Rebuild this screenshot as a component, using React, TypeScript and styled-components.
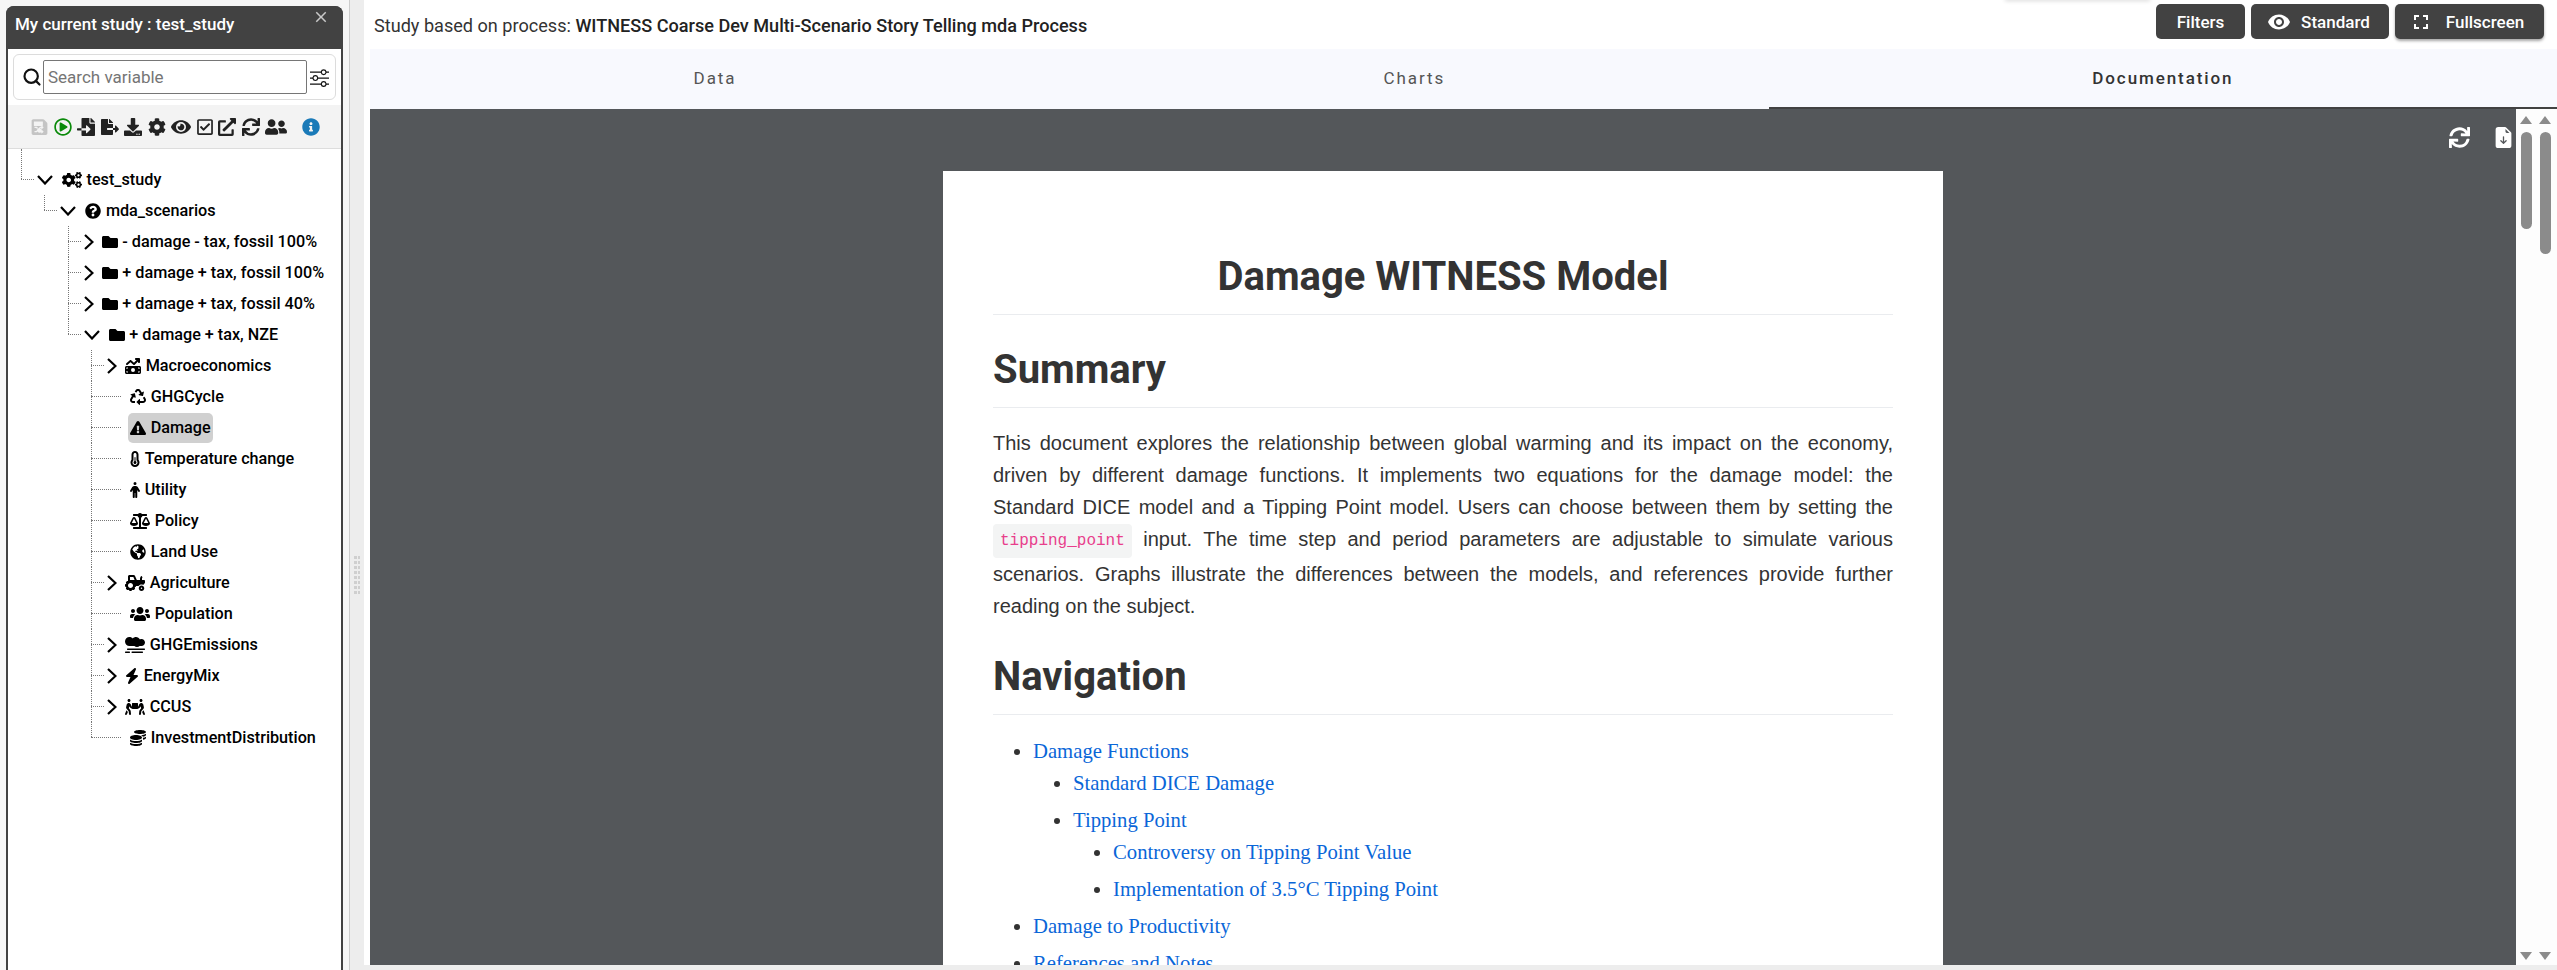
import React from 'react';
import styled, { createGlobalStyle } from 'styled-components';
import { Search } from 'lucide-react';
import {
  FaBalanceScale, FaCog, FaCogs, FaCoins, FaDownload, FaExclamationTriangle, FaExternalLinkAlt, FaEye,
  FaFileExport, FaFileImport, FaFolder, FaGlobeAmericas, FaInfoCircle, FaPeopleCarry, FaQuestionCircle, FaRandom,
  FaRecycle, FaRegCheckSquare, FaRegPlayCircle, FaSave, FaSmog, FaSync, FaTractor, FaUserFriends, FaUsers,
} from 'react-icons/fa';
import { FaBolt, FaMoneyBillTrendUp, FaPerson, FaTemperatureHalf } from 'react-icons/fa6';
import { BsFileEarmarkArrowDownFill, BsSliders } from 'react-icons/bs';
import { MdClose, MdFullscreen, MdRemoveRedEye } from 'react-icons/md';

const GlobalStyle = createGlobalStyle`
  html, body { margin: 0; height: 100%; overflow: hidden; background: #fff; }
  body { font-family: Roboto, "Liberation Sans", sans-serif; }
  #root { height: 970px; }
`;

const Page = styled.div`
  display: flex;
  height: 970px;
  overflow: hidden;
`;

const Sidebar = styled.aside`
  box-sizing: border-box;
  width: 350px;
  flex: none;
  padding: 6px 6px 0;
  background: #f6f6f6;
  border-right: 1px solid #ccc;
`;

const StudyPanel = styled.div`
  box-sizing: border-box;
  height: 100%;
  background: #fff;
  border: 2px solid #424242;
  border-bottom: none;
  border-radius: 8px 8px 0 0;
  display: flex;
  flex-direction: column;
`;

const PanelHeader = styled.div`
  position: relative;
  flex: none;
  margin: -2px -2px 0;
  padding: 8px 0 0 9px;
  box-sizing: border-box;
  height: 43px;
  background: #424242;
  border-radius: 8px 8px 0 0;
  color: #fff;
  font-size: 17px;
  font-weight: 500;
  line-height: 20px;
`;

const CloseButton = styled.span`
  position: absolute;
  top: 2px;
  right: 13px;
  color: #c9c9c9;
  font-size: 18px;
  line-height: 0;
`;

const SearchBox = styled.div`
  box-sizing: border-box;
  display: flex;
  align-items: center;
  margin: 5px;
  height: 46px;
  padding: 0 5px 0 8px;
  border: 1px solid #dcdcdc;
  border-radius: 6px;
  color: #111;
`;

const SearchInput = styled.input`
  box-sizing: border-box;
  width: 264px;
  height: 34px;
  margin: 0 3px 0 1px;
  padding: 0 4px;
  border: 1px solid #767676;
  border-radius: 2px;
  font-family: Roboto, sans-serif;
  font-size: 17px;
  &::placeholder { color: #757575; }
`;

const SlidersIcon = styled.span`
  display: flex;
  font-size: 19px;
`;

const Toolbar = styled.div`
  box-sizing: border-box;
  display: flex;
  align-items: center;
  gap: 5.5px;
  height: 44px;
  flex: none;
  padding: 0 0 0 23px;
  background: #f3f3f3;
  border-bottom: 1px solid #ddd;
  color: #222;
`;

const ToolIcon = styled.span<{ $color?: string; $push?: number; $w?: number }>`
  position: relative;
  display: flex;
  color: ${(p) => p.$color || 'inherit'};
  margin-left: ${(p) => p.$push || 0}px;
  svg { height: 18px; width: ${(p) => p.$w || 18}px; }
`;

const SaveCross = styled.span`
  position: absolute;
  left: 3px;
  top: 7px;
  display: flex;
  color: #f3f3f3;
  svg { height: 9px; width: 10px; }
`;

const TreeRoot = styled.ul`
  list-style: none;
  margin: 0;
  padding: 15px 0 0 13px;
  color: #000;
  font-size: 16.2px;
  font-weight: 500;
`;

const TreeList = styled.ul`
  list-style: none;
  margin: 0;
  padding: 0 0 0 23.4px;
`;

const TreeItem = styled.li<{ $last?: boolean; $root?: boolean; $leaf?: boolean }>`
  position: relative;
  &::before {
    content: '';
    position: absolute;
    left: 0;
    top: ${(p) => (p.$root ? '-15px' : 0)};
    height: ${(p) => (p.$last ? (p.$root ? '30px' : '15px') : '100%')};
    border-left: 1px dotted #777;
  }
  &::after {
    content: '';
    position: absolute;
    left: 0;
    top: 15px;
    width: ${(p) => (p.$leaf ? '30px' : '13px')};
    border-top: 1px dotted #777;
  }
`;

const TreeRow = styled.div<{ $leaf?: boolean }>`
  display: flex;
  align-items: center;
  height: 31px;
  padding-left: ${(p) => (p.$leaf ? 37 : 16)}px;
  white-space: nowrap;
`;

const Toggle = styled.span<{ $open?: boolean }>`
  display: flex;
  align-items: center;
  width: ${(p) => (p.$open ? 23 : 16)}px;
  flex: none;
`;

const NodeLabel = styled.span<{ $selected?: boolean; $w?: number }>`
  display: flex;
  align-items: center;
  gap: 4.5px;
  height: 30px;
  padding: 0 2px;
  border-radius: 5px;
  background: ${(p) => (p.$selected ? '#d0d0d0' : 'transparent')};
  svg { height: 16px; width: ${(p) => p.$w || 16}px; flex: none; }
`;

const Gutter = styled.div`
  box-sizing: border-box;
  width: 14px;
  flex: none;
  padding: 556px 0 0 4px;
  background: #ededed;
`;

const Grip = styled.div`
  position: relative;
  width: 6px;
  height: 38px;
  background-image: linear-gradient(#cfcfcf 3px, transparent 3px);
  background-size: 100% 5px;
  &::after {
    content: '';
    position: absolute;
    left: 2.5px;
    top: 0;
    bottom: 0;
    width: 1px;
    background: #ededed;
  }
`;

const Main = styled.main`
  flex: 1;
  min-width: 0;
  display: flex;
  flex-direction: column;
  padding-bottom: 5px;
  background: #ededed;
`;

const TopBar = styled.div`
  position: relative;
  box-sizing: border-box;
  display: flex;
  align-items: flex-start;
  height: 49px;
  flex: none;
  padding: 4px 13px 0 10px;
  background: #fff;
`;

const HiddenToast = styled.div`
  position: absolute;
  top: -4px;
  right: 407px;
  width: 145px;
  height: 4px;
  box-shadow: 0 1px 4px rgba(0, 0, 0, 0.15);
`;

const ProcessTitle = styled.div`
  flex: 1;
  margin-top: 9px;
  color: #333;
  font-size: 18.1px;
  line-height: 26px;
  b { color: #222; font-weight: 500; }
`;

const ActionButton = styled.button<{ $raised?: boolean; $w: number; $gap?: number; $shift?: number }>`
  display: flex;
  align-items: center;
  justify-content: center;
  gap: ${(p) => p.$gap || 0}px;
  box-sizing: border-box;
  width: ${(p) => p.$w}px;
  height: 35px;
  margin-left: 6px;
  padding: 0 ${(p) => p.$shift || 0}px 0 0;
  border: none;
  border-radius: 5px;
  background: #424242;
  color: #fff;
  font-family: Roboto, sans-serif;
  font-size: 17px;
  font-weight: 500;
  box-shadow: ${(p) => (p.$raised ? '0 2px 3px rgba(0,0,0,.35)' : 'none')};
  svg { font-size: 24px; }
`;

const Workspace = styled.div`
  flex: 1;
  min-height: 0;
  display: flex;
  flex-direction: column;
  padding-left: 6px;
  background: #fff;
`;

const Tabs = styled.div`
  display: flex;
  height: 60px;
  flex: none;
  background: #f8f9fe;
`;

const Tab = styled.div<{ $active?: boolean }>`
  box-sizing: border-box;
  flex: 1 1 auto;
  display: flex;
  align-items: center;
  justify-content: center;
  color: ${(p) => (p.$active ? '#333' : '#555')};
  font-size: 17px;
  font-weight: ${(p) => (p.$active ? 500 : 400)};
  letter-spacing: 1.9px;
  border-bottom: 2px solid ${(p) => (p.$active ? '#424242' : 'transparent')};
`;

const ViewerRow = styled.div`
  flex: 1;
  min-height: 0;
  display: flex;
`;

const Viewer = styled.div`
  position: relative;
  flex: 1;
  min-width: 0;
  overflow: hidden;
  background: #54575a;
  padding-top: 62px;
  box-sizing: border-box;
`;

const ViewerTool = styled.span<{ $right: number }>`
  position: absolute;
  top: 18px;
  right: ${(p) => p.$right}px;
  display: flex;
  color: #fff;
  font-size: 21px;
`;

const Sheet = styled.article`
  box-sizing: border-box;
  width: 1000px;
  margin: 0 auto;
  padding: 81px 50px 0;
  background: #fff;
  color: #333;
  font-family: "Liberation Sans", Arial, sans-serif;
  font-size: 20px;
  line-height: 32px;
`;

const Title = styled.h1<{ $center?: boolean }>`
  margin: 0 0 19px;
  padding-bottom: 12px;
  border-bottom: 1px solid #eaecef;
  color: #333;
  font-family: Roboto, sans-serif;
  font-size: 40px;
  font-weight: 700;
  line-height: 50px;
  text-align: ${(p) => (p.$center ? 'center' : 'left')};
`;

const SectionTitle = styled(Title).attrs({ as: 'h2' })`
  margin-top: 30px;
  margin-bottom: 20px;
`;

const Paragraph = styled.p`
  margin: -1px 0 1px;
  text-align: justify;
`;

const InlineCode = styled.code`
  display: inline-block;
  height: 34px;
  padding: 0 7px;
  background: #f3f4f4;
  border-radius: 4px;
  color: #e83e8c;
  font-family: "Liberation Mono", monospace;
  font-size: 16px;
  line-height: 34px;
  vertical-align: middle;
`;

const NavList = styled.ul`
  margin: 0;
  padding-left: 40px;
  list-style: disc;
  font-family: "Liberation Serif", serif;
  color: #333;
  li + li { margin-top: 5px; }
`;

const NavLink = styled.a`
  color: #0a66d8;
  font-size: 20.7px;
  text-decoration: none;
`;

const ScrollGutter = styled.div`
  width: 41px;
  flex: none;
  display: flex;
  padding: 7px 7px 5px 5px;
  gap: 8px;
  box-sizing: border-box;
  background: #fdfdfd;
`;

const ScrollTrack = styled.div<{ $thumb: number }>`
  position: relative;
  width: 11px;
  &::before {
    content: '';
    position: absolute;
    top: 16px;
    left: 0;
    width: 11px;
    height: ${(p) => p.$thumb}px;
    border-radius: 6px;
    background: #8b8b8b;
  }
`;

const ScrollArrow = styled.span<{ $down?: boolean }>`
  position: absolute;
  left: -1px;
  ${(p) => (p.$down ? 'bottom: 0;' : 'top: 0;')}
  border-left: 6.5px solid transparent;
  border-right: 6.5px solid transparent;
  ${(p) => (p.$down ? 'border-top: 8px solid #8b8b8b;' : 'border-bottom: 8px solid #8b8b8b;')}
`;

function Chevron({ open }: { open?: boolean }) {
  return open ? (
    <svg width="16" height="10" viewBox="0 0 16 10" fill="none" stroke="#000" strokeWidth="2.2">
      <polyline points="1,1 8,8.5 15,1" />
    </svg>
  ) : (
    <svg width="10" height="16" viewBox="0 0 10 16" fill="none" stroke="#000" strokeWidth="2.2">
      <polyline points="1,1 8.5,8 1,15" />
    </svg>
  );
}

type Node = {
  label: string;
  icon: React.ReactNode;
  w?: number;
  open?: boolean;
  toggle?: boolean;
  selected?: boolean;
  children?: Node[];
};

const models: Node[] = [
  { label: 'Macroeconomics', icon: <FaMoneyBillTrendUp />, toggle: true },
  { label: 'GHGCycle', icon: <FaRecycle /> },
  { label: 'Damage', icon: <FaExclamationTriangle />, selected: true },
  { label: 'Temperature change', icon: <FaTemperatureHalf />, w: 10 },
  { label: 'Utility', icon: <FaPerson />, w: 10 },
  { label: 'Policy', icon: <FaBalanceScale />, w: 20 },
  { label: 'Land Use', icon: <FaGlobeAmericas /> },
  { label: 'Agriculture', icon: <FaTractor />, w: 20, toggle: true },
  { label: 'Population', icon: <FaUsers />, w: 20 },
  { label: 'GHGEmissions', icon: <FaSmog />, w: 20, toggle: true },
  { label: 'EnergyMix', icon: <FaBolt />, w: 14, toggle: true },
  { label: 'CCUS', icon: <FaPeopleCarry />, w: 20, toggle: true },
  { label: 'InvestmentDistribution', icon: <FaCoins /> },
];

const tree: Node = {
  label: 'test_study',
  icon: <FaCogs />,
  w: 20,
  open: true,
  toggle: true,
  children: [
    {
      label: 'mda_scenarios',
      icon: <FaQuestionCircle />,
      open: true,
      toggle: true,
      children: [
        { label: '- damage - tax, fossil 100%', icon: <FaFolder />, toggle: true },
        { label: '+ damage + tax, fossil 100%', icon: <FaFolder />, toggle: true },
        { label: '+ damage + tax, fossil 40%', icon: <FaFolder />, toggle: true },
        { label: '+ damage + tax, NZE', icon: <FaFolder />, open: true, toggle: true, children: models },
      ],
    },
  ],
};

function TreeNode({ node, last, root }: { node: Node; last?: boolean; root?: boolean }) {
  return (
    <TreeItem $last={last} $root={root} $leaf={!node.toggle}>
      <TreeRow $leaf={!node.toggle}>
        {node.toggle && (
          <Toggle $open={node.open}>
            <Chevron open={node.open} />
          </Toggle>
        )}
        <NodeLabel $selected={node.selected} $w={node.w}>
          {node.icon}
          {node.label}
        </NodeLabel>
      </TreeRow>
      {node.children && (
        <TreeList>
          {node.children.map((child, i) => (
            <TreeNode key={child.label} node={child} last={i === node.children!.length - 1} />
          ))}
        </TreeList>
      )}
    </TreeItem>
  );
}

export default function App() {
  return (
    <Page>
      <GlobalStyle />
      <Sidebar>
        <StudyPanel>
          <PanelHeader>
            My current study : test_study
            <CloseButton>
              <MdClose />
            </CloseButton>
          </PanelHeader>
          <SearchBox>
            <Search size={20} strokeWidth={2.6} />
            <SearchInput placeholder="Search variable" />
            <SlidersIcon>
              <BsSliders />
            </SlidersIcon>
          </SearchBox>
          <Toolbar>
            <ToolIcon $color="#c4c4c4" $w={17}>
              <FaSave />
              <SaveCross>
                <FaRandom />
              </SaveCross>
            </ToolIcon>
            <ToolIcon $color="#0a8a0a">
              <FaRegPlayCircle />
            </ToolIcon>
            <ToolIcon><FaFileImport /></ToolIcon>
            <ToolIcon><FaFileExport /></ToolIcon>
            <ToolIcon><FaDownload /></ToolIcon>
            <ToolIcon><FaCog /></ToolIcon>
            <ToolIcon $w={20}><FaEye /></ToolIcon>
            <ToolIcon $w={16}><FaRegCheckSquare /></ToolIcon>
            <ToolIcon><FaExternalLinkAlt /></ToolIcon>
            <ToolIcon><FaSync /></ToolIcon>
            <ToolIcon $w={22}><FaUserFriends /></ToolIcon>
            <ToolIcon $color="#1a7ab8" $push={9}>
              <FaInfoCircle />
            </ToolIcon>
          </Toolbar>
          <TreeRoot>
            <TreeNode node={tree} last root />
          </TreeRoot>
        </StudyPanel>
      </Sidebar>
      <Gutter>
        <Grip />
      </Gutter>
      <Main>
        <TopBar>
          <HiddenToast />
          <ProcessTitle>
            Study based on process: <b>WITNESS Coarse Dev Multi-Scenario Story Telling mda Process</b>
          </ProcessTitle>
          <ActionButton $w={89}>Filters</ActionButton>
          <ActionButton $w={138} $gap={10} $shift={3}>
            <MdRemoveRedEye />
            Standard
          </ActionButton>
          <ActionButton $w={149} $gap={13} $shift={6} $raised>
            <MdFullscreen />
            Fullscreen
          </ActionButton>
        </TopBar>
        <Workspace>
          <Tabs>
            <Tab>Data</Tab>
            <Tab>Charts</Tab>
            <Tab $active>Documentation</Tab>
          </Tabs>
          <ViewerRow>
            <Viewer>
              <ViewerTool $right={46}><FaSync /></ViewerTool>
              <ViewerTool $right={2}><BsFileEarmarkArrowDownFill /></ViewerTool>
              <Sheet>
                <Title $center>Damage WITNESS Model</Title>
                <SectionTitle>Summary</SectionTitle>
                <Paragraph>
                  This document explores the relationship between global warming and its impact on the economy, driven by
                  different damage functions. It implements two equations for the damage model: the Standard DICE model and
                  a Tipping Point model. Users can choose between them by setting the <InlineCode>tipping_point</InlineCode>{' '}
                  input. The time step and period parameters are adjustable to simulate various scenarios. Graphs illustrate
                  the differences between the models, and references provide further reading on the subject.
                </Paragraph>
                <SectionTitle>Navigation</SectionTitle>
                <NavList>
                  <li>
                    <NavLink>Damage Functions</NavLink>
                    <NavList>
                      <li><NavLink>Standard DICE Damage</NavLink></li>
                      <li>
                        <NavLink>Tipping Point</NavLink>
                        <NavList>
                          <li><NavLink>Controversy on Tipping Point Value</NavLink></li>
                          <li><NavLink>Implementation of 3.5°C Tipping Point</NavLink></li>
                        </NavList>
                      </li>
                    </NavList>
                  </li>
                  <li><NavLink>Damage to Productivity</NavLink></li>
                  <li><NavLink>References and Notes</NavLink></li>
                </NavList>
              </Sheet>
            </Viewer>
            <ScrollGutter>
              <ScrollTrack $thumb={97}>
                <ScrollArrow />
                <ScrollArrow $down />
              </ScrollTrack>
              <ScrollTrack $thumb={122}>
                <ScrollArrow />
                <ScrollArrow $down />
              </ScrollTrack>
            </ScrollGutter>
          </ViewerRow>
        </Workspace>
      </Main>
    </Page>
  );
}
